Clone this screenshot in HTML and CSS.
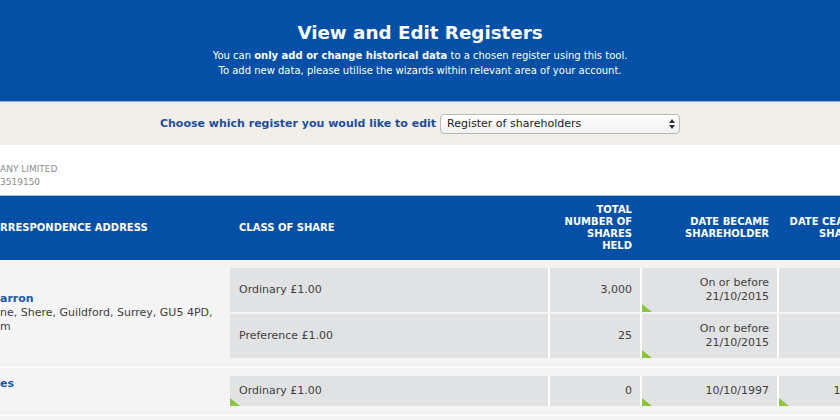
FILE: index.html
```html
<!DOCTYPE html>
<html lang="en">
<head>
<meta charset="utf-8">
<title>View and Edit Registers</title>
<link rel="stylesheet" href="styles.css">
</head>
<body>
<header class="hero">
  <h1 class="hero-title">View and Edit Registers</h1>
  <p class="hero-text">You can <strong>only add or change historical data</strong> to a chosen register using this tool.<br>To add new data, please utilise the wizards within relevant area of your account.</p>
</header>
<section class="chooser">
  <label class="chooser-label" for="reg">Choose which register you would like to edit</label>
  <span class="select-wrap">
    <select id="reg" class="select"><option>Register of shareholders</option></select>
    <svg class="select-arrows" width="6" height="10" viewBox="0 0 6 10"><path d="M3 0 L6 4 L0 4 Z M0 6 L6 6 L3 10 Z" fill="#333"/></svg>
  </span>
</section>
<section class="company">
  <div>ANY LIMITED</div>
  <div>3519150</div>
</section>
<div class="register">
  <div class="reg-head">
    <div class="col-address head-cell">RRESPONDENCE ADDRESS</div>
    <div class="reg-grid">
      <div class="head-cell head-left">CLASS OF SHARE</div>
      <div class="head-cell head-right">TOTAL<br>NUMBER OF<br>SHARES<br>HELD</div>
      <div class="head-cell head-right">DATE BECAME<br>SHAREHOLDER</div>
      <div class="head-cell head-right">DATE CEASED TO BE<br>SHAREHOLDER</div>
    </div>
  </div>
  <div class="group">
    <div class="col-address addr">
      <div class="addr-name">arron</div>
      <div>ne, Shere, Guildford, Surrey, GU5 4PD,</div>
      <div>m</div>
    </div>
    <div class="rows">
      <div class="reg-grid row row-tall">
        <div class="cell cell-left">Ordinary £1.00</div>
        <div class="cell cell-right">3,000</div>
        <div class="cell cell-right flag">On or before<br>21/10/2015</div>
        <div class="cell cell-right"></div>
      </div>
      <div class="reg-grid row row-tall">
        <div class="cell cell-left">Preference £1.00</div>
        <div class="cell cell-right">25</div>
        <div class="cell cell-right flag">On or before<br>21/10/2015</div>
        <div class="cell cell-right"></div>
      </div>
    </div>
  </div>
  <div class="group">
    <div class="col-address addr">
      <div class="addr-name">es</div>
      <div>&nbsp;</div>
    </div>
    <div class="rows">
      <div class="reg-grid row row-short">
        <div class="cell cell-left flag">Ordinary £1.00</div>
        <div class="cell cell-right">0</div>
        <div class="cell cell-right flag">10/10/1997</div>
        <div class="cell cell-right cell-ceased flag">11/10/2013</div>
      </div>
    </div>
  </div>
  <div class="group group-tail"></div>
</div>
</body>
</html>
```
FILE: styles.css
```css
html, body {
  margin: 0;
  padding: 0;
  overflow: hidden;
  background: #ffffff;
  font-family: "DejaVu Sans", Verdana, sans-serif;
}

.hero {
  box-sizing: border-box;
  height: 102px;
  padding-top: 22px;
  background: #0350a6;
  border-bottom: 1px solid #8eaed6;
  color: #ffffff;
  text-align: center;
}

.hero-title {
  margin: 0;
  font-size: 18.3px;
  line-height: 22px;
  font-weight: bold;
}

.hero-text {
  margin: 4px 0 0;
  font-size: 10px;
  line-height: 15px;
}

.chooser {
  height: 43px;
  background: #f2efe9;
  display: flex;
  align-items: center;
  justify-content: center;
  gap: 4px;
}

.chooser-label {
  font-size: 11px;
  font-weight: bold;
  color: #1d4f9b;
}

.select-wrap {
  position: relative;
  display: inline-block;
}

.select {
  appearance: none;
  -webkit-appearance: none;
  box-sizing: border-box;
  width: 240px;
  height: 20px;
  margin: 0;
  padding: 0 0 0 6px;
  border: 1px solid #b9b9b9;
  border-radius: 4px;
  background: linear-gradient(#ffffff, #f1f1f1);
  font-family: "DejaVu Sans", Verdana, sans-serif;
  font-size: 11px;
  color: #222222;
  display: block;
}

.select-arrows {
  position: absolute;
  right: 5px;
  top: 5px;
}

.company {
  box-sizing: border-box;
  height: 50px;
  padding-top: 18px;
  font-size: 9px;
  line-height: 13px;
  color: #8c8c8c;
}

.register {
  width: 911px;
}

.reg-head {
  display: flex;
  height: 64px;
  background: #0350a6;
  border-top: 1px solid #a6c1e3;
  color: #ffffff;
}

.col-address {
  flex: 0 0 230px;
}

.reg-grid {
  display: grid;
  grid-template-columns: 318px 90px 135px 132px;
  column-gap: 2px;
}

.head-cell {
  display: flex;
  align-items: center;
  font-size: 10px;
  font-weight: bold;
  line-height: 12px;
}

.head-left {
  padding-left: 9px;
}

.head-right {
  justify-content: flex-end;
  text-align: right;
  padding-right: 8px;
}

.group {
  display: flex;
  background: #f4f4f4;
  margin-bottom: 2px;
}

.group-tail {
  height: 20px;
}

.addr {
  display: flex;
  flex-direction: column;
  justify-content: center;
  font-size: 11px;
  line-height: 14px;
  color: #3f3f3f;
  white-space: nowrap;
}

.addr-name {
  font-weight: bold;
  color: #1d58a8;
}

.rows {
  display: flex;
  flex-direction: column;
  gap: 2px;
  padding: 8px 0;
  background: #f4f4f4;
}

.row {
  background: #ffffff;
}

.row-tall {
  height: 44px;
}

.row-short {
  height: 30px;
}

.cell {
  position: relative;
  display: flex;
  align-items: center;
  background: #e1e2e4;
  font-size: 11px;
  line-height: 14px;
  color: #3f3f3f;
}

.cell-left {
  padding-left: 9px;
}

.cell-right {
  justify-content: flex-end;
  text-align: right;
  padding-right: 8px;
}

.cell-ceased {
  padding-right: 14px;
}

.flag::after {
  content: "";
  position: absolute;
  left: 0;
  bottom: 0;
  width: 0;
  height: 0;
  border-left: 10px solid #8cc63f;
  border-top: 8px solid transparent;
}
```
